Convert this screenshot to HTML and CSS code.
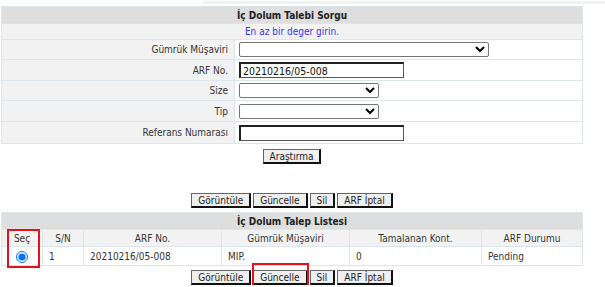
FILE: index.html
```html
<!DOCTYPE html>
<html lang="tr">
<head>
    <meta charset="UTF-8">
    <meta name="viewport" content="width=device-width, initial-scale=1.0">
    <title>İç Dolum Talebi Sorgu</title>
    <link rel="stylesheet" href="styles.css">
</head>
<body>
    <div class="page">
        <div class="topline"></div>

        <table class="form-table">
            <tr class="row-title">
                <th colspan="2">İç Dolum Talebi Sorgu</th>
            </tr>
            <tr class="row-hint">
                <td colspan="2">En az bir deger girin.</td>
            </tr>
            <tr class="row-a">
                <td class="label">Gümrük Müşaviri</td>
                <td class="value"><select class="sel sel-wide"><option></option></select></td>
            </tr>
            <tr class="row-b">
                <td class="label">ARF No.</td>
                <td class="value"><input class="txt" type="text" value="20210216/05-008"></td>
            </tr>
            <tr class="row-a">
                <td class="label">Size</td>
                <td class="value"><select class="sel sel-small"><option></option></select></td>
            </tr>
            <tr class="row-b">
                <td class="label">Tip</td>
                <td class="value"><select class="sel sel-small"><option></option></select></td>
            </tr>
            <tr class="row-c">
                <td class="label">Referans Numarası</td>
                <td class="value"><input class="txt" type="text" value=""></td>
            </tr>
        </table>

        <div class="search-row">
            <button class="btn">Araştırma</button>
        </div>

        <div class="actions actions-top">
            <button class="btn">Görüntüle</button>
            <button class="btn">Güncelle</button>
            <button class="btn">Sil</button>
            <button class="btn">ARF İptal</button>
        </div>

        <div class="list-wrap">
            <table class="list-table">
                <tr class="row-title">
                    <th colspan="6">İç Dolum Talep Listesi</th>
                </tr>
                <tr class="row-head">
                    <td class="c-sec">Seç</td>
                    <td class="c-sn">S/N</td>
                    <td class="c-arf">ARF No.</td>
                    <td class="c-gm">Gümrük Müşaviri</td>
                    <td class="c-tk">Tamalanan Kont.</td>
                    <td class="c-dur">ARF Durumu</td>
                </tr>
                <tr class="row-data">
                    <td class="center"><input class="radio" type="radio" name="sec" checked></td>
                    <td>1</td>
                    <td>20210216/05-008</td>
                    <td>MIP.</td>
                    <td>0</td>
                    <td>Pending</td>
                </tr>
            </table>
            <span class="mark mark-sec"></span>
        </div>

        <div class="actions actions-bottom">
            <button class="btn">Görüntüle</button>
            <span class="marked">
                <button class="btn">Güncelle</button>
                <span class="mark mark-btn"></span>
            </span>
            <button class="btn">Sil</button>
            <button class="btn">ARF İptal</button>
        </div>
    </div>
</body>
</html>
```

FILE: styles.css
```css
body {
    margin: 0;
    background-color: #ffffff;
    font-family: "DejaVu Sans", Verdana, sans-serif;
    font-stretch: condensed;
    font-size: 10px;
    color: #333333;
    overflow: hidden;
}
.page {
    width: 605px;
    padding-left: 1px;
    box-sizing: border-box;
}
.topline {
    height: 3px;
    margin: 1px 0 2px 202px;
    background-color: #f2f2f2;
}
table {
    border-collapse: collapse;
    width: 582px;
}
td, th {
    border: 1px solid #dde5ed;
    padding: 0;
}
.row-title th {
    height: 16px;
    background-color: #dedede;
    color: #222222;
    font-weight: bold;
    text-align: center;
}
.row-hint td {
    height: 15px;
    background-color: #f2f2f2;
    color: #3535f2;
    text-align: center;
}
.row-a td {
    height: 19px;
}
.row-b td {
    height: 20px;
}
.row-c td {
    height: 21px;
}
.label {
    width: 226px;
    padding-right: 6px;
    background-color: #f2f2f2;
    text-align: right;
}
.value {
    padding-left: 4px;
    background-color: #ffffff;
}
.sel {
    display: block;
    height: 15px;
    padding: 0;
    border: 1px solid #767676;
    border-radius: 2px;
    background-color: #ffffff;
    font: inherit;
    font-size: 9px;
}
.sel-wide {
    width: 250px;
}
.sel-small {
    width: 140px;
}
.txt {
    display: block;
    box-sizing: border-box;
    width: 165px;
    height: 16px;
    padding: 0 2px;
    border: 1px solid #555555;
    border-top: 2px solid #222222;
    border-left: 2px solid #222222;
    font-family: "DejaVu Sans", Verdana, sans-serif;
    font-stretch: condensed;
    font-size: 10.5px;
    color: #111111;
    outline: none;
}
.btn {
    height: 15px;
    padding: 0 6px;
    border: 1px solid #666666;
    border-right: 2px solid #111111;
    border-bottom: 2px solid #111111;
    background-color: #efefef;
    font-family: "DejaVu Sans", Verdana, sans-serif;
    font-stretch: condensed;
    font-size: 10px;
    color: #222222;
    line-height: 11px;
    cursor: pointer;
}
.search-row {
    width: 582px;
    margin-top: 5px;
    display: flex;
    justify-content: center;
}
.actions {
    width: 582px;
    display: flex;
    justify-content: center;
    gap: 2px;
}
.actions-top {
    margin-top: 29px;
}
.actions-bottom {
    margin-top: 4px;
}
.list-wrap {
    position: relative;
    margin-top: 4px;
}
.row-head td {
    height: 16px;
    background-color: #f2f2f2;
    text-align: center;
}
.row-data td {
    height: 18px;
    padding-left: 6px;
    background-color: #ffffff;
}
.row-data td.center {
    padding-left: 0;
    text-align: center;
}
.c-sec { width: 40px; }
.c-sn { width: 40px; }
.c-arf { width: 137px; }
.c-gm { width: 127px; }
.c-tk { width: 131px; }
.radio {
    display: block;
    width: 12px;
    height: 12px;
    margin: 1px auto 0;
}
.marked {
    position: relative;
    display: inline-block;
}
.mark {
    position: absolute;
    border: 2px solid #e8101a;
    pointer-events: none;
}
.mark-sec {
    left: 6px;
    top: 17px;
    width: 29px;
    height: 35px;
}
.mark-btn {
    left: -1px;
    top: -7px;
    width: 53px;
    height: 30px;
}
```
